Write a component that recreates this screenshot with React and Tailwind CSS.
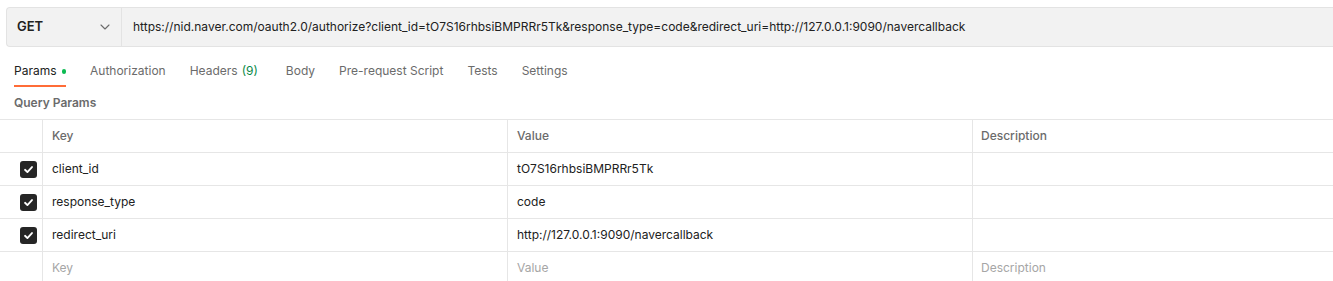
import React from "react";

const rows = [
  { k: "client_id", v: "tO7S16rhbsiBMPRRr5Tk" },
  { k: "response_type", v: "code" },
  { k: "redirect_uri", v: "http://127.0.0.1:9090/navercallback" },
];

function Check() {
  return (
    <div className="w-[17px] h-[17px] rounded-[3px] bg-[#262626] flex items-center justify-center">
      <svg width="11" height="11" viewBox="0 0 12 12" fill="none">
        <path d="M2.2 6.3 L4.8 8.8 L9.8 3.3" stroke="white" strokeWidth="2" strokeLinecap="round" strokeLinejoin="round" />
      </svg>
    </div>
  );
}

const tabs = [
  { t: "Authorization", ml: "ml-[24px]" },
  { t: "Headers", ml: "ml-[24px]" },
  { t: "Body", ml: "ml-[28px]" },
  { t: "Pre-request Script", ml: "ml-[24px]" },
  { t: "Tests", ml: "ml-[24px]" },
  { t: "Settings", ml: "ml-[24px]" },
];

export default function App() {
  return (
    <div className="w-[1333px] h-[281px] bg-white overflow-hidden text-[#212121]" style={{ fontFamily: "Inter, 'Noto Sans', sans-serif" }}>
      <div className="pt-[7px] pl-[6px]">
        <div className="h-[40px] flex bg-[#f2f2f2] border border-r-0 border-[#e3e3e3] rounded-l-[4px]">
          <div className="w-[115px] shrink-0 flex items-center justify-between pl-[10px] pr-[11px] border-r border-[#e3e3e3]">
            <span className="text-[13px] font-semibold text-[#212121]">GET</span>
            <svg width="10" height="6" viewBox="0 0 10 6" fill="none">
              <path d="M1 1 L5 5 L9 1" stroke="#6b6b6b" strokeWidth="1.1" strokeLinecap="round" strokeLinejoin="round" />
            </svg>
          </div>
          <div className="flex items-center pl-[11px] text-[12px] text-[#212121] whitespace-nowrap">
            https://nid.naver.com/oauth2.0/authorize?client_id=tO7S16rhbsiBMPRRr5Tk&amp;response_type=code&amp;redirect_uri=http://127.0.0.1:9090/navercallback
          </div>
        </div>
      </div>

      <div className="mt-[14px] pl-[14px] flex text-[12px]">
        <div className="flex flex-col w-[52px]">
          <span className="leading-[20px] flex items-center text-[#212121]">
            Params
            <span className="ml-[5px] w-[5px] h-[5px] rounded-full bg-[#0cbb52]" />
          </span>
          <span className="mt-[4px] h-[2px] bg-[#ff6c37]" />
        </div>
        {tabs.map(({ t, ml }) => (
          <div key={t} className={`flex flex-col ${ml}`}>
            <span className="leading-[20px] text-[#6b6b6b] whitespace-nowrap">
              {t}
              {t === "Headers" && <span className="ml-[4px] text-[#0a8a48]">(9)</span>}
            </span>
            <span className="mt-[4px] h-[2px]" />
          </div>
        ))}
      </div>

      <div className="mt-[8px] pl-[14px] text-[12px] leading-[16px] font-semibold text-[#6b6b6b]">Query Params</div>

      <div className="mt-[8px] border-t border-[#e6e6e6]">
        <div className="grid grid-cols-[42px_465px_465px_1fr] h-[33px] border-b border-[#e6e6e6] text-[12px] font-medium text-[#6b6b6b]">
          <div />
          <div className="border-l border-[#e6e6e6] pl-[9px] flex items-center">Key</div>
          <div className="border-l border-[#e6e6e6] pl-[9px] flex items-center">Value</div>
          <div className="border-l border-[#e6e6e6] pl-[8px] flex items-center">Description</div>
        </div>
        {rows.map((r) => (
          <div key={r.k} className="grid grid-cols-[42px_465px_465px_1fr] h-[33px] border-b border-[#e6e6e6] text-[12px] text-[#212121]">
            <div className="flex items-center justify-end pr-[5px]">
              <Check />
            </div>
            <div className="border-l border-[#e6e6e6] pl-[9px] flex items-center">{r.k}</div>
            <div className="border-l border-[#e6e6e6] pl-[9px] flex items-center">{r.v}</div>
            <div className="border-l border-[#e6e6e6]" />
          </div>
        ))}
        <div className="grid grid-cols-[42px_465px_465px_1fr] h-[31px] text-[12px] text-[#a6a6a6]">
          <div />
          <div className="border-l border-[#e6e6e6] pl-[9px] flex items-center">Key</div>
          <div className="border-l border-[#e6e6e6] pl-[9px] flex items-center">Value</div>
          <div className="border-l border-[#e6e6e6] pl-[8px] flex items-center">Description</div>
        </div>
      </div>
    </div>
  );
}
